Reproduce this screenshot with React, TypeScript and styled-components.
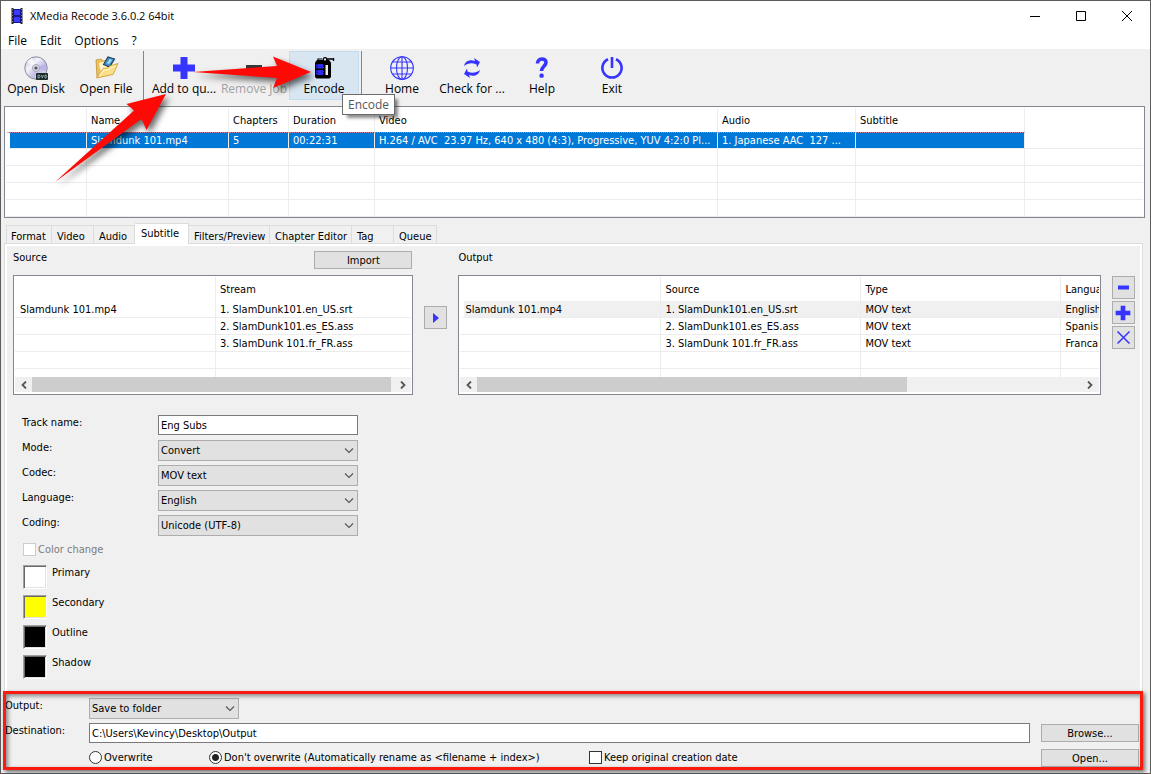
import React from 'react';
import styled, { createGlobalStyle, css } from 'styled-components';

const BLUE = '#3535ff';
const dialogFont = '"DejaVu Sans Condensed", "DejaVu Sans", sans-serif';
const systemFont = '"Open Sans", "Noto Sans", sans-serif';

const GlobalStyle = createGlobalStyle`
  *, *::before, *::after { box-sizing: border-box; }
  body { margin: 0; background: #f0f0f0; color: #000; }
  button, input, select { font: inherit; color: inherit; margin: 0; }
`;

const Window = styled.div`
  position: relative;
  display: flex;
  flex-direction: column;
  min-height: 100vh;
  border: 1px solid #5c5c5c;
  background: #f0f0f0;
  font: 11px/16px ${dialogFont};
`;

/* Title bar and menu */

const TitleBar = styled.header`
  display: flex;
  align-items: center;
  height: 30px;
  padding-left: 10px;
  background: #fff;
`;

const Title = styled.h1`
  flex: 1;
  margin: 0 0 0 7px;
  font: 11px/16px ${systemFont};
`;

const CaptionButton = styled.button`
  display: grid;
  place-items: center;
  width: 46px;
  height: 30px;
  padding: 0;
  border: 0;
  background: none;
`;

const MenuBar = styled.nav`
  display: flex;
  gap: 13px;
  height: 18px;
  padding-left: 7px;
  background: #fff;
`;

const MenuItem = styled.button`
  padding: 0;
  border: 0;
  background: none;
  font: 12px/20px ${systemFont};
`;

/* Toolbar */

const Toolbar = styled.div`
  display: flex;
  align-items: flex-start;
  height: 57px;
  padding-top: 2px;
`;

const ToolButton = styled.button<{ $active?: boolean }>`
  display: flex;
  flex-direction: column;
  align-items: center;
  width: 70px;
  height: 49px;
  padding: 4px 0 0;
  border: 1px solid ${p => (p.$active ? '#c3dcee' : 'transparent')};
  background: ${p => (p.$active ? '#d8e6f2' : 'none')};
  font: 12px/18px ${systemFont};
  white-space: nowrap;

  &:disabled { color: #a0a0a0; }
  svg { display: block; flex: none; }
`;

const ToolSeparator = styled.div`
  width: 1px;
  height: 52px;
  margin: 0 5px 0 2px;
  background: #858585;
`;

const Tooltip = styled.div`
  position: absolute;
  left: 341px;
  top: 93px;
  padding: 1px 5px;
  border: 1px solid #6c6c6c;
  background: #fff;
  color: #575757;
  font: 12px/17px ${systemFont};
  box-shadow: 4px 4px 3px -1px rgba(0, 0, 0, 0.45);
`;

/* Lists */

const ListFrame = styled.div`
  min-width: 0;
  padding: 1px;
  border: 1px solid #828790;
  background: #fff;
  overflow: hidden;
`;

const JobList = styled(ListFrame)`
  margin: 0 5px 0 3px;
  height: 112px;
`;

const ListBody = styled.div`
  height: 100px;
  overflow: hidden;
`;

const Table = styled.table`
  width: 100%;
  table-layout: fixed;
  border-collapse: separate;
  border-spacing: 0;

  th, td {
    padding: 0 4px;
    border-right: 1px solid #ececec;
    overflow: hidden;
    text-align: left;
    font-weight: normal;
    white-space: pre;
    text-overflow: ellipsis;
  }
  th { height: 24px; padding-top: 1px; }
  td { height: 17px; padding-top: 2px; line-height: 14px; border-bottom: 1px solid #ececec; }
  td:first-child { padding-left: 5px; }
  th:last-child, td:last-child { border-right: 0; padding-right: 0; text-overflow: clip; }
`;

const Row = styled.tr<{ $state?: 'selected' | 'inactive' }>`
  ${p =>
    p.$state &&
    css`
      td { background: ${p.$state === 'selected' ? '#0078d7' : '#f0f0f0'}; }
      td:first-child {
        border-left: 4px solid #fff;
        padding-left: 1px;
      }
    `}
  ${p =>
    p.$state === 'selected' &&
    css`
      td { padding-top: 1px; color: #fff; border-top: 1px dotted #c07a9a; }
      td:last-child { background: none; border-top: 0; }
    `}
`;

const ScrollBar = styled.div`
  display: flex;
  height: 15px;
  background: #f0f0f0;
`;

const ScrollButton = styled.button`
  display: grid;
  place-items: center;
  width: 17px;
  padding: 0;
  border: 0;
  background: none;
`;

const ScrollTrack = styled.div`
  flex: 1;
`;

const ScrollThumb = styled.div<{ $portion: number }>`
  width: ${p => p.$portion}%;
  height: 100%;
  background: #cdcdcd;
`;

/* Tabs and page */

const TabStrip = styled.div`
  display: flex;
  align-items: flex-end;
  height: 25px;
  padding-left: 2px;
  margin: 0 7px 0 3px;
`;

const Tab = styled.button<{ $width: number; $active?: boolean }>`
  flex: none;
  width: ${p => p.$width}px;
  height: 18px;
  padding: 0 0 0 5px;
  border: 1px solid #dcdcdc;
  border-left-width: 0;
  border-bottom: 0;
  background: #f0f0f0;
  text-align: left;
  white-space: nowrap;
  line-height: 18px;

  &:first-child { border-left-width: 1px; padding-left: 4px; }

  ${p =>
    p.$active
      ? css`
          z-index: 1;
          height: 21px;
          margin-bottom: -1px;
          padding-left: 6px;
          background: #fff;
        `
      : css`
          padding-top: 2px;
        `}
`;

const Page = styled.main`
  flex: 1;
  margin: 0 7px 0 3px;
  padding: 5px 5px 6px;
  border: 1px solid #dcdcdc;
  border-bottom: 0;
  box-shadow: inset 2px 2px 0 #fff, inset -2px 0 0 #fff;
`;

const Streams = styled.div`
  display: grid;
  grid-template-columns: minmax(0, 400fr) 45px minmax(0, 642fr) 36px;
  grid-template-rows: 26px 120px;
  padding-left: 3px;
`;

const Caption = styled.h2`
  margin: 0;
  font: inherit;
  line-height: 18px;
`;

const SourceHead = styled.div`
  display: flex;
  justify-content: space-between;
  align-items: flex-start;
`;

const PushButton = styled.button`
  width: 98px;
  height: 18px;
  padding: 1px 0 0;
  border: 1px solid #adadad;
  background: #e1e1e1;
  line-height: 15px;
`;

const ImportButton = styled(PushButton)`
  margin: 2px 1px 0 0;
`;

const SquareButton = styled.button`
  display: grid;
  place-items: center;
  width: 23px;
  height: 23px;
  padding: 0;
  border: 1px solid #adadad;
  background: #e1e1e1;
`;

const TransferCell = styled.div`
  padding: 31px 0 0 11px;
`;

const SideButtons = styled.div`
  display: flex;
  flex-direction: column;
  gap: 2px;
  padding: 1px 0 0 11px;
`;

const FormGrid = styled.div`
  display: grid;
  grid-template-columns: 136px 200px;
  grid-auto-rows: 25px;
  align-items: start;
  margin-top: 20px;
  padding-left: 12px;
`;

const TextBox = styled.input`
  display: block;
  width: 100%;
  height: 20px;
  padding: 0 2px;
  border: 1px solid #7a7a7a;
  border-radius: 0;
  background: #fff;
`;

const SelectShell = styled.div`
  position: relative;
  svg { position: absolute; right: 4px; top: 7px; pointer-events: none; }
`;

const SelectBox = styled.select`
  display: block;
  width: 100%;
  height: 21px;
  padding: 0 2px;
  appearance: none;
  border: 1px solid #adadad;
  border-radius: 0;
  background: #e1e1e1;
`;

const Check = styled.label<{ $disabled?: boolean }>`
  display: flex;
  align-items: center;
  gap: 2px;
  line-height: 15px;
  color: ${p => (p.$disabled ? '#7d7d7d' : '#000')};
`;

const Tick = styled.input`
  appearance: none;
  width: 13px;
  height: 13px;
  border: 1px solid #333;
  background: #fff;
  &:disabled { border-color: #cccccc; }
  &[type='radio'] { border-radius: 50%; }
  &[type='radio']:checked {
    background: radial-gradient(circle, #222 0 3px, #fff 4px);
  }
`;

const Colors = styled.div`
  padding: 2px 0 0 13px;
`;

const ColorList = styled.div`
  padding-top: 8px;
`;

const ColorRow = styled.label`
  display: flex;
  gap: 5px;
  height: 30px;
`;

const Swatch = styled.button<{ $color: string }>`
  width: 24px;
  height: 24px;
  padding: 0;
  border: 1px solid;
  border-color: #a0a0a0 #fff #fff #a0a0a0;
  background: ${p => p.$color};
  box-shadow: inset 1px 1px 0 #696969, inset -1px -1px 0 #e3e3e3;
`;

/* Output settings */

const Footer = styled.footer`
  position: relative;
  display: grid;
  grid-template-columns: 84px minmax(0, 1fr) 98px;
  grid-template-rows: 25px 25px 22px;
  align-items: start;
  padding: 6px 11px 3px 4px;
`;

const FolderSelect = styled.div`
  width: 150px;
`;

const DestinationInput = styled(TextBox)`
  width: calc(100% - 11px);
`;

const Choices = styled.div`
  grid-column: 2;
  display: flex;
  padding-top: 2px;
`;

const Choice = styled.div<{ $width: number }>`
  width: ${p => p.$width}px;
  white-space: nowrap;
`;

const FooterButton = styled(PushButton)`
  grid-column: 3;
  margin-top: 1px;
`;

const RedFrame = styled.div`
  position: absolute;
  inset: -1px 7px 3px 2px;
  border: 3px solid #fb1a10;
  box-shadow: 2px 2px 4px rgba(0, 0, 0, 0.55), inset 2px 2px 4px rgba(0, 0, 0, 0.45);
  pointer-events: none;
`;

const Arrows = styled.svg`
  position: absolute;
  left: -1px;
  top: -1px;
  pointer-events: none;
  filter: drop-shadow(3px 4px 3px rgba(0, 0, 0, 0.6));
`;

/* Icons */

const DiscIcon = () => (
  <svg width="26" height="24" viewBox="0 0 26 24">
    <defs>
      <linearGradient id="disc" x1="0" y1="0" x2="1" y2="1">
        <stop offset="0" stopColor="#b9b9d6" />
        <stop offset="0.35" stopColor="#f3f3fb" />
        <stop offset="0.6" stopColor="#c3bfe6" />
        <stop offset="1" stopColor="#dfe0ee" />
      </linearGradient>
    </defs>
    <circle cx="13" cy="12" r="11.2" fill="url(#disc)" stroke="#8c8c9c" strokeWidth="1" />
    <path d="M13 12 4 6a11 11 0 0 1 5-4z" fill="#fff" opacity=".7" />
    <path d="M13 12 23 8a11 11 0 0 1 0 7z" fill="#b2a6e8" opacity=".6" />
    <circle cx="13" cy="12" r="3.6" fill="#d5d5e4" stroke="#9a9ab0" strokeWidth=".8" />
    <circle cx="13" cy="12" r="1.6" fill="#555" />
    <rect x="13" y="17" width="12" height="7" rx="1" fill="#1d2b2b" />
    <path d="M15 19v3h1.2l1-1.5-1-1.5zM18.400 19l1 3 1-3M22 19v3h1l.8-1.500-.8-1.500z" fill="none" stroke="#b6cccc" strokeWidth=".7" />
  </svg>
);

const FolderIcon = () => (
  <svg width="26" height="24" viewBox="0 0 26 24">
    <path d="M3 4l5-1 2 2 8-1v8L4 21z" fill="#edc25c" stroke="#c2922c" strokeWidth=".8" />
    <path d="M6 7l12-3 3 4-13 9z" fill="#fff6d0" />
    <path d="M10.500 8.500 15 1l6.500 2-5 8z" fill="#3f9ad4" stroke="#243b55" strokeWidth="1.200" />
    <path d="M14 7l3-4 2 1-3 4z" fill="#a5ddf5" />
    <path d="M3.500 22 10 12.500l5-.5 2-2 8-2.500-5 11z" fill="#fbdf86" stroke="#cf9f38" strokeWidth=".9" />
    <path d="M6.500 19.500 11 14l4.500-.5 2-2 5-1.300" fill="none" stroke="#fff3c0" strokeWidth="1.300" />
  </svg>
);

const PlusIcon = ({ size }: { size: number }) => (
  <svg width={size} height={size} viewBox="0 0 24 24">
    <path d="M8.500 1h7v7.500H23v7h-7.500V23h-7v-7.500H1v-7h7.500z" fill={BLUE} />
  </svg>
);

const MinusIcon = () => (
  <svg width="24" height="24" viewBox="0 0 24 24">
    <rect x="4" y="9" width="16" height="5" fill="#3a3a3a" />
  </svg>
);

const EncodeIcon = () => (
  <svg width="24" height="24" viewBox="0 0 24 24">
    <path d="M3 6.500 5 4h12l2 2.500V21l-1.500 1.500h-13L3 21z" fill="#000" />
    <path d="M4 8h8v4.500H4zM4 14h8v5H4z" fill="#2b2bf0" />
    <path d="M5 8v11M11.500 8v11" stroke="#000" strokeWidth="1" strokeDasharray="1 1" />
    <rect x="13.500" y="9" width="2.500" height="10" fill="#eee" />
    <path d="M6 4V3h4" fill="none" stroke="#000" strokeWidth="1.200" />
    <circle cx="13" cy="3.500" r="1.800" fill="#d8e6f2" stroke="#000" strokeWidth="1.300" />
    <path d="M14.500 3h7M21.500 2v3" fill="none" stroke="#000" strokeWidth="1.400" />
  </svg>
);

const GlobeIcon = () => (
  <svg width="26" height="24" viewBox="0 0 26 24" fill="none" stroke={BLUE} strokeWidth="1.100">
    <circle cx="13" cy="12" r="11.300" />
    <ellipse cx="13" cy="12" rx="5.500" ry="11.300" />
    <path d="M13 .7v22.600M1.700 12h22.600M3.500 6h19M3.500 18h19" />
  </svg>
);

const RefreshIcon = () => (
  <svg width="24" height="24" viewBox="0 0 24 24" fill={BLUE}>
    <path d="M4 10c1-5 6-7 11-5l-1-3 6 4-3 5.500-.5-3C12 6.500 8 7 4 10z" />
    <path d="M20 14c-1 5-6 7-11 5l1 3-6-4 3-5.500.5 3C12 17.500 16 17 20 14z" />
  </svg>
);

const HelpIcon = () => (
  <svg width="24" height="24" viewBox="0 0 24 24">
    <path d="M7.500 7.500C7.500 1.700 16 1.500 16 6.500c0 3.500-4.500 4-4.500 8.500" fill="none" stroke={BLUE} strokeWidth="3.600" />
    <rect x="9.500" y="17.500" width="4.200" height="4.200" rx="1.500" fill={BLUE} />
  </svg>
);

const PowerIcon = () => (
  <svg width="24" height="24" viewBox="0 0 24 24" fill="none" stroke={BLUE} strokeWidth="2.600">
    <path d="M8 3.200a9.600 9.600 0 1 0 8 0M12 1v11" />
  </svg>
);

const AppIcon = () => (
  <svg width="12" height="16" viewBox="0 0 12 16">
    <path d="M1.500 0v16M10.500 0v16" stroke="#222" strokeWidth="2" />
    <path d="M1.500 1v15M10.500 1v15" stroke="#777" strokeWidth="1" strokeDasharray="1 2" />
    <rect x="2" y="1" width="8" height="14" fill="#15158c" />
    <rect x="3" y="2" width="6" height="5" fill="#3a3aff" />
    <rect x="3" y="9" width="6" height="5" fill="#3a3aff" />
  </svg>
);

const Chevron = () => (
  <svg width="10" height="7" viewBox="0 0 10 7" fill="none" stroke="#555" strokeWidth="1.100">
    <path d="M1 1.500 5 5.500 9 1.500" />
  </svg>
);

const ScrollArrow = ({ dir }: { dir: 'left' | 'right' }) => (
  <svg width="8" height="8" viewBox="0 0 8 8" fill="none" stroke="#555" strokeWidth="1.800">
    <path d={dir === 'left' ? 'M6 .5 2.500 4 6 7.500' : 'M2 .5 5.500 4 2 7.500'} />
  </svg>
);

/* Parts */

const Scroller = ({ portion }: { portion: number }) => (
  <ScrollBar>
    <ScrollButton aria-label="Scroll left"><ScrollArrow dir="left" /></ScrollButton>
    <ScrollTrack><ScrollThumb $portion={portion} /></ScrollTrack>
    <ScrollButton aria-label="Scroll right"><ScrollArrow dir="right" /></ScrollButton>
  </ScrollBar>
);

type ListProps = {
  columns: { label: string; width?: number }[];
  rows: string[][];
  highlight?: 'selected' | 'inactive';
  total: number;
};

const List = ({ columns, rows, highlight, total }: ListProps) => {
  const blanks = Array.from({ length: total - rows.length }, () => columns.map(() => ''));
  return (
    <Table>
      <colgroup>
        {columns.map((c, i) => <col key={i} width={c.width} />)}
      </colgroup>
      <thead>
        <tr>{columns.map((c, i) => <th key={i}>{c.label}</th>)}</tr>
      </thead>
      <tbody>
        {[...rows, ...blanks].map((r, i) => (
          <Row key={i} $state={i === 0 ? highlight : undefined}>
            {r.map((cell, j) => <td key={j}>{cell}</td>)}
          </Row>
        ))}
      </tbody>
    </Table>
  );
};

const Dropdown = ({ id, value }: { id: string; value: string }) => (
  <SelectShell>
    <SelectBox id={id} defaultValue={value}>
      <option>{value}</option>
    </SelectBox>
    <Chevron />
  </SelectShell>
);

const tabs = [
  { label: 'Format', width: 46 },
  { label: 'Video', width: 42 },
  { label: 'Audio', width: 41 },
  { label: 'Subtitle', width: 54, active: true },
  { label: 'Filters/Preview', width: 81 },
  { label: 'Chapter Editor', width: 82 },
  { label: 'Tag', width: 42 },
  { label: 'Queue', width: 43 },
];

const fields = [
  { id: 'mode', label: 'Mode:', value: 'Convert' },
  { id: 'codec', label: 'Codec:', value: 'MOV text' },
  { id: 'language', label: 'Language:', value: 'English' },
  { id: 'coding', label: 'Coding:', value: 'Unicode (UTF-8)' },
];

const colors = [
  { label: 'Primary', color: '#fff' },
  { label: 'Secondary', color: '#ff0' },
  { label: 'Outline', color: '#000' },
  { label: 'Shadow', color: '#000' },
];

export default function App() {
  return (
    <>
      <GlobalStyle />
      <Window>
        <TitleBar>
          <AppIcon />
          <Title>XMedia Recode 3.6.0.2 64bit</Title>
          <CaptionButton aria-label="Minimize">
            <svg width="10" height="10" viewBox="0 0 10 10"><path d="M0 5.500h10" stroke="#000" /></svg>
          </CaptionButton>
          <CaptionButton aria-label="Maximize">
            <svg width="10" height="10" viewBox="0 0 10 10"><path d="M.5.500h9v9h-9z" fill="none" stroke="#000" /></svg>
          </CaptionButton>
          <CaptionButton aria-label="Close">
            <svg width="10" height="10" viewBox="0 0 10 10"><path d="M0 0 10 10M10 0 0 10" stroke="#000" /></svg>
          </CaptionButton>
        </TitleBar>
        <MenuBar>
          <MenuItem>File</MenuItem>
          <MenuItem>Edit</MenuItem>
          <MenuItem>Options</MenuItem>
          <MenuItem>?</MenuItem>
        </MenuBar>

        <Toolbar>
          <ToolButton><DiscIcon />Open Disk</ToolButton>
          <ToolButton><FolderIcon />Open File</ToolButton>
          <ToolSeparator />
          <ToolButton><PlusIcon size={24} />Add to qu...</ToolButton>
          <ToolButton disabled><MinusIcon />Remove Job</ToolButton>
          <ToolButton $active><EncodeIcon />Encode</ToolButton>
          <ToolSeparator />
          <ToolButton><GlobeIcon />Home</ToolButton>
          <ToolButton><RefreshIcon />Check for ...</ToolButton>
          <ToolButton><HelpIcon />Help</ToolButton>
          <ToolButton><PowerIcon />Exit</ToolButton>
        </Toolbar>

        <JobList>
          <List
            total={5}
            highlight="selected"
            columns={[
              { label: '', width: 81 },
              { label: 'Name', width: 142 },
              { label: 'Chapters', width: 60 },
              { label: 'Duration', width: 86 },
              { label: 'Video', width: 343 },
              { label: 'Audio', width: 138 },
              { label: 'Subtitle', width: 169 },
              { label: '' },
            ]}
            rows={[[
              '', 'Slamdunk 101.mp4', '5', '00:22:31',
              'H.264 / AVC  23.97 Hz, 640 x 480 (4:3), Progressive, YUV 4:2:0 Pl...',
              '1. Japanese AAC  127 ...', '', '',
            ]]}
          />
        </JobList>

        <TabStrip role="tablist">
          {tabs.map(t => (
            <Tab key={t.label} role="tab" aria-selected={!!t.active} $width={t.width} $active={t.active}>
              {t.label}
            </Tab>
          ))}
        </TabStrip>

        <Page>
          <Streams>
            <SourceHead>
              <Caption>Source</Caption>
              <ImportButton>Import</ImportButton>
            </SourceHead>
            <span />
            <Caption>Output</Caption>
            <span />

            <ListFrame>
              <ListBody>
                <List
                  total={5}
                  columns={[{ label: '', width: 201 }, { label: 'Stream' }]}
                  rows={[
                    ['Slamdunk 101.mp4', '1. SlamDunk101.en_US.srt'],
                    ['', '2. SlamDunk101.es_ES.ass'],
                    ['', '3. SlamDunk 101.fr_FR.ass'],
                  ]}
                />
              </ListBody>
              <Scroller portion={99} />
            </ListFrame>
            <TransferCell>
              <SquareButton aria-label="Add to output">
                <svg width="6" height="10" viewBox="0 0 6 10"><path d="M0 0 6 5 0 10z" fill={BLUE} /></svg>
              </SquareButton>
            </TransferCell>
            <ListFrame>
              <ListBody>
                <List
                  total={5}
                  highlight="inactive"
                  columns={[
                    { label: '', width: 201 },
                    { label: 'Source', width: 200 },
                    { label: 'Type', width: 200 },
                    { label: 'Langua' },
                  ]}
                  rows={[
                    ['Slamdunk 101.mp4', '1. SlamDunk101.en_US.srt', 'MOV text', 'English'],
                    ['', '2. SlamDunk101.es_ES.ass', 'MOV text', 'Spanish'],
                    ['', '3. SlamDunk 101.fr_FR.ass', 'MOV text', 'Francai'],
                  ]}
                />
              </ListBody>
              <Scroller portion={71} />
            </ListFrame>
            <SideButtons>
              <SquareButton aria-label="Remove stream">
                <svg width="15" height="15" viewBox="0 0 15 15"><path d="M2 5.500h11v4H2z" fill={BLUE} /></svg>
              </SquareButton>
              <SquareButton aria-label="Add stream"><PlusIcon size={16} /></SquareButton>
              <SquareButton aria-label="Clear streams">
                <svg width="15" height="15" viewBox="0 0 15 15"><path d="M1.500 1.500l12 12M13.500 1.500l-12 12" stroke={BLUE} strokeWidth="1.500" /></svg>
              </SquareButton>
            </SideButtons>
          </Streams>

          <FormGrid>
            <label htmlFor="track">Track name:</label>
            <TextBox id="track" defaultValue="Eng Subs" />
            {fields.map(f => (
              <React.Fragment key={f.id}>
                <label htmlFor={f.id}>{f.label}</label>
                <Dropdown id={f.id} value={f.value} />
              </React.Fragment>
            ))}
          </FormGrid>

          <Colors>
            <Check $disabled><Tick type="checkbox" disabled />Color change</Check>
            <ColorList>
              {colors.map(c => (
                <ColorRow key={c.label}>
                  <Swatch $color={c.color} />
                  {c.label}
                </ColorRow>
              ))}
            </ColorList>
          </Colors>
        </Page>

        <Footer>
          <label htmlFor="output">Output:</label>
          <FolderSelect><Dropdown id="output" value="Save to folder" /></FolderSelect>
          <span />
          <label htmlFor="destination">Destination:</label>
          <DestinationInput id="destination" defaultValue="C:\Users\Kevincy\Desktop\Output" />
          <FooterButton>Browse...</FooterButton>
          <Choices>
            <Choice $width={120}><Check><Tick type="radio" name="existing" />Overwrite</Check></Choice>
            <Choice $width={380}>
              <Check>
                <Tick type="radio" name="existing" defaultChecked />
                {"Don't overwrite (Automatically rename as <filename + index>)"}
              </Check>
            </Choice>
            <Choice $width={160}><Check><Tick type="checkbox" />Keep original creation date</Check></Choice>
          </Choices>
          <FooterButton>Open...</FooterButton>
          <RedFrame />
        </Footer>

        <Tooltip role="tooltip">Encode</Tooltip>
        <Arrows width="340" height="200" viewBox="0 0 340 200" fill="#fe0a06" aria-hidden="true">
          <path d="M55 182 134 110.500 126.500 104 166 94 146.500 130 141.500 119z" />
          <path d="M193 72 277 66 273 56.500 311 72 273 88 277 78z" />
        </Arrows>
      </Window>
    </>
  );
}
